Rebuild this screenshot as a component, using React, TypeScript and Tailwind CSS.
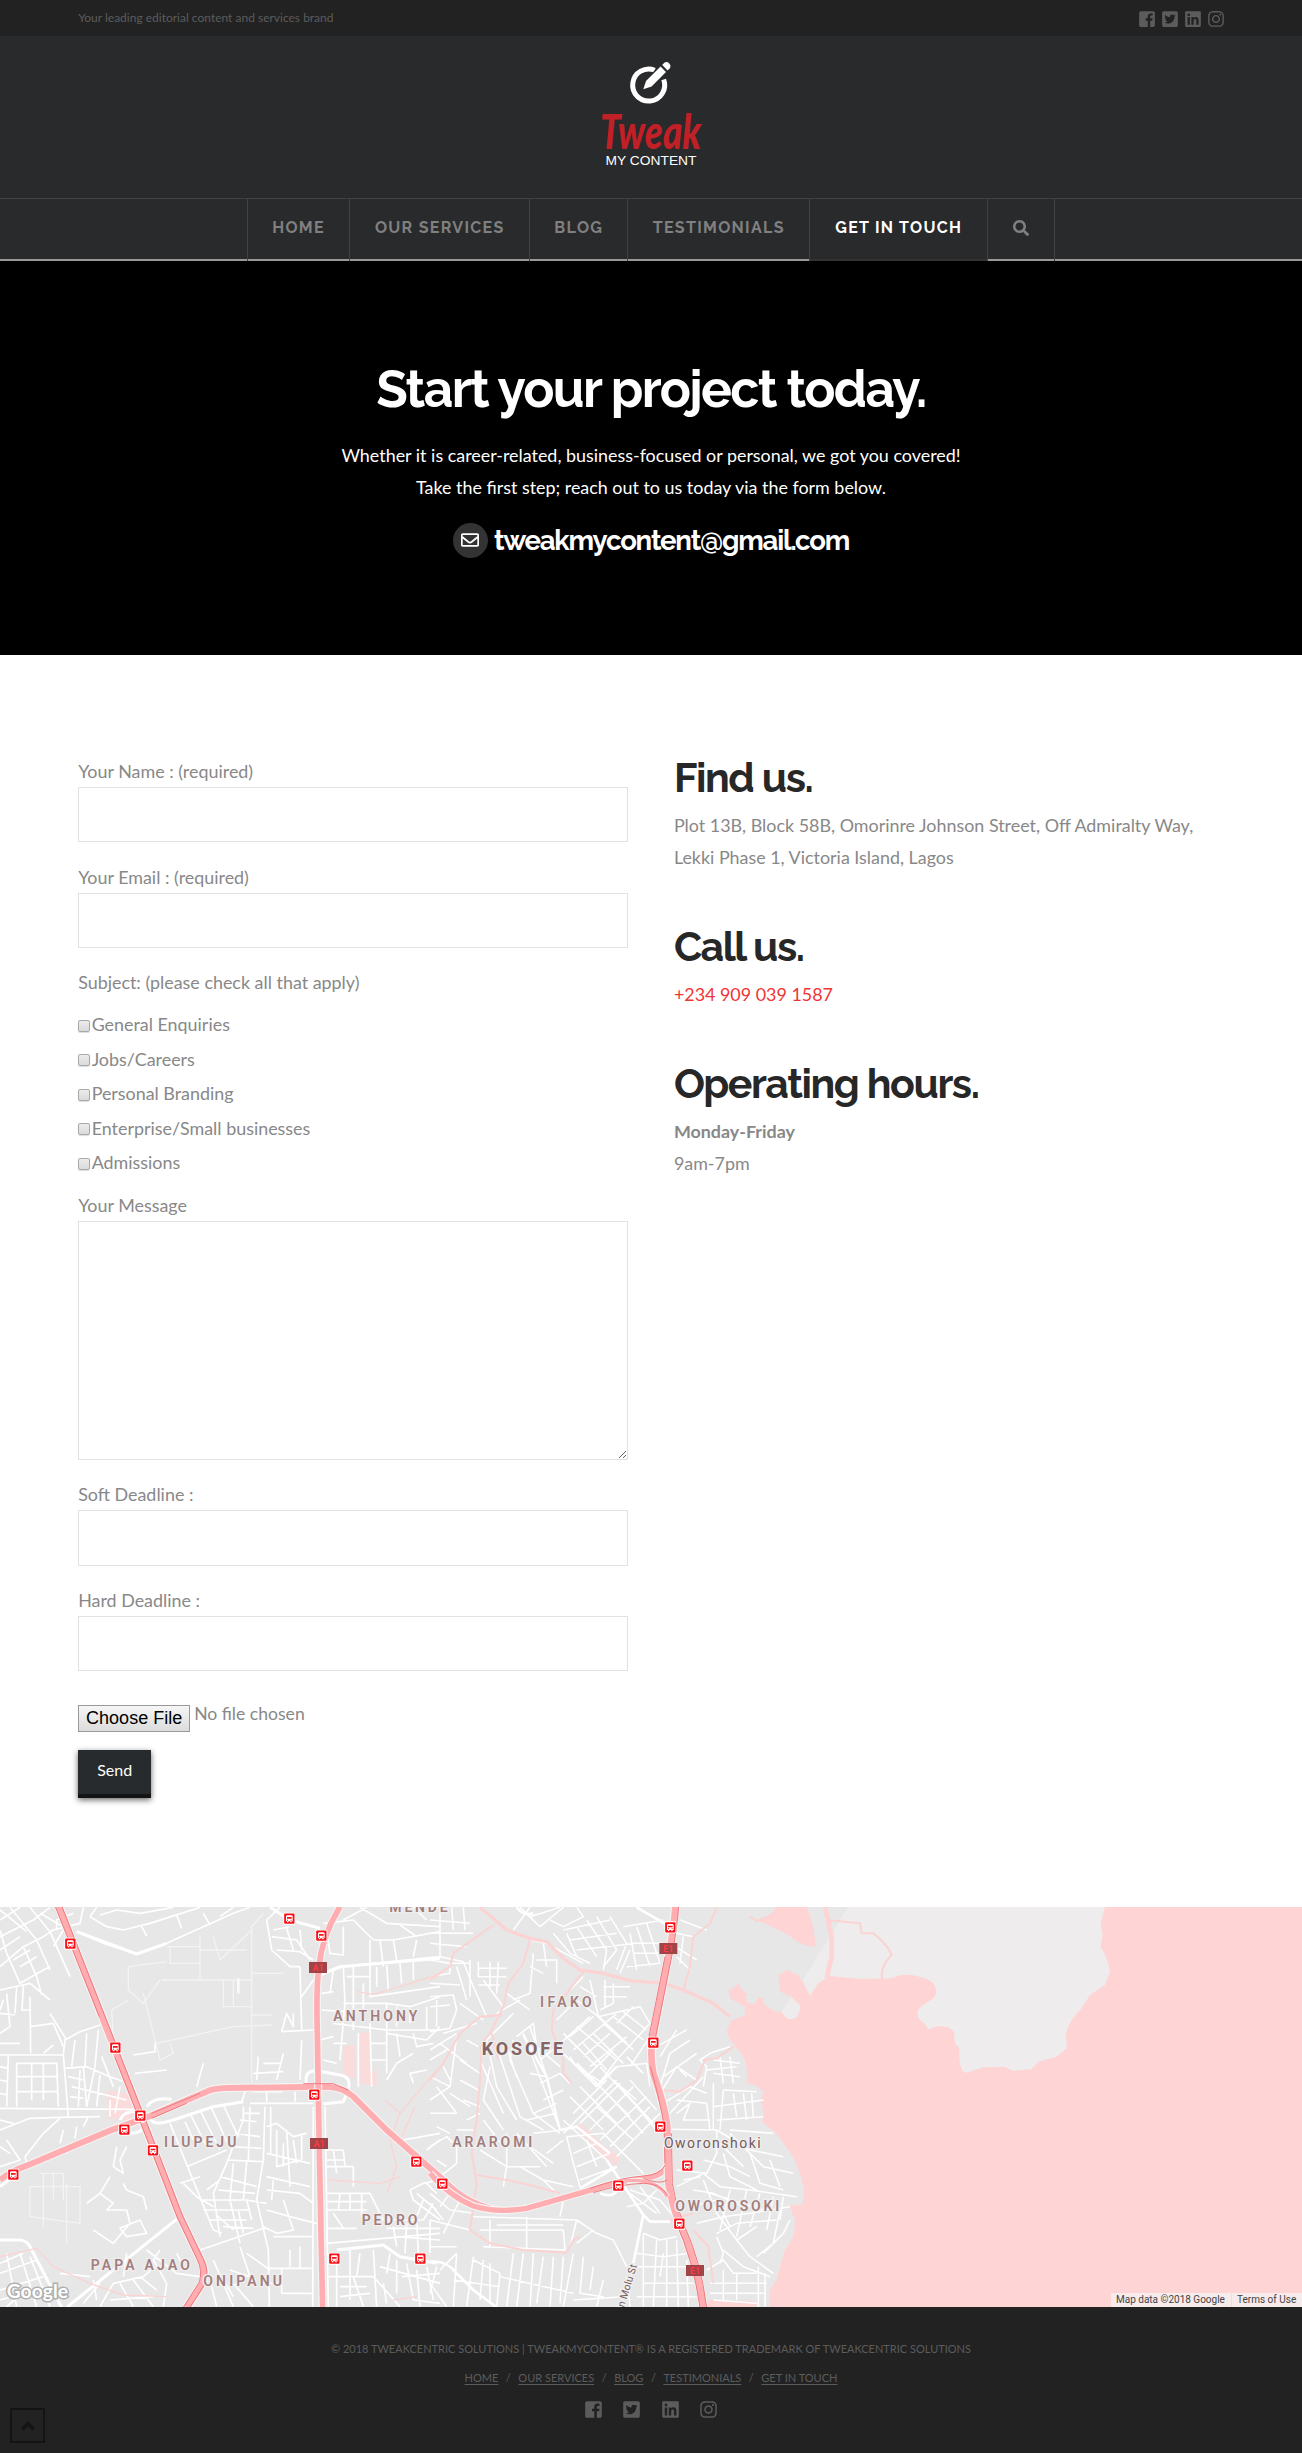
import React from 'react';
import { FaAngleUp, FaInstagram, FaLinkedin, FaRegEnvelope, FaSearch, FaTwitterSquare } from 'react-icons/fa';

function FacebookBox() {
  return (
    <svg width="1em" height="1em" viewBox="0 0 448 512" fill="currentColor">
      <path d="M448 80v352c0 26.5-21.5 48-48 48h-85.3V302.8h60.6l8.7-67.6h-69.3V192c0-19.6 5.4-32.9 33.5-32.9H384V98.7c-6.2-.8-27.4-2.7-52.2-2.7-51.6 0-87 31.5-87 89.4v49.9H184v67.6h60.9V480H48c-26.5 0-48-21.5-48-48V80c0-26.5 21.5-48 48-48h352c26.5 0 48 21.5 48 48z" />
    </svg>
  );
}

const socials = [FacebookBox, FaTwitterSquare, FaLinkedin, FaInstagram];

function Logo() {
  return (
    <svg width="110" height="120" viewBox="0 0 110 120" className="overflow-visible" aria-label="Tweak My Content">
      <path d="M58.7 18.2 A16 16 0 1 0 67.7 27.5" fill="none" stroke="#fff" strokeWidth="5" />
      <path d="M47.3 37.3 L50 29 L64.6 14.6 L70 20 L55.6 34.6 Z" fill="#fff" stroke="#292a2c" strokeWidth="3" paintOrder="stroke" />
      <path d="M66.2 13 L68.3 10.8 A4 4 0 0 1 73.8 16.3 L71.6 18.4 Z" fill="#fff" />
      <text x="4" y="96.5" textLength="101" lengthAdjust="spacingAndGlyphs" className="fill-[#c02026] font-['Lato'] text-[47px] font-black italic">
        Tweak
      </text>
      <text x="9.5" y="113" textLength="91" lengthAdjust="spacingAndGlyphs" className="fill-white font-['Liberation_Sans'] text-[12.6px]">
        MY CONTENT
      </text>
    </svg>
  );
}

const nav = [
  { label: 'HOME', size: 'w-[102.5px]' },
  { label: 'OUR SERVICES', size: 'w-[180px]' },
  { label: 'BLOG', size: 'w-[98px]' },
  { label: 'TESTIMONIALS', size: 'w-[182px]' },
  { label: 'GET IN TOUCH', size: 'w-[178px]' },
];

function Header() {
  return (
    <header className="bg-[#292a2c]">
      <div className="h-9 bg-[#222]">
        <div className="mx-auto flex h-full w-[88%] items-center justify-between">
          <p className="text-[12px] leading-9 text-[#5c5c5c]">Your leading editorial content and services brand</p>
          <div className="-mr-[1.5px] flex gap-[5px] pt-0.5 text-[18px] text-[#5c5c5c]">
            {socials.map((Icon, i) => (
              <Icon key={i} />
            ))}
          </div>
        </div>
      </div>
      <div className="flex h-[162px] justify-center pt-[16px]">
        <Logo />
      </div>
      <nav className="flex h-[63px] justify-center border-t border-[#414244] font-['Raleway','Lato',sans-serif] text-[16px] font-bold leading-[58px] tracking-[1.3px] whitespace-nowrap text-[#808080] shadow-[inset_0_-2px_0_#999]">
        {nav.map(({ label, size }) => (
          <a
            key={label}
            className={`${size} border-l border-[#414244] text-center ${
              label === 'GET IN TOUCH' ? 'bg-[#292a2c] text-white shadow-[inset_0_-2px_0_#333]' : ''
            }`}
          >
            {label}
          </a>
        ))}
        <a className="flex w-[68px] justify-center border-x border-[#414244] pt-[21px] text-[16px]">
          <FaSearch />
        </a>
      </nav>
    </header>
  );
}

function Hero() {
  return (
    <section className="flex h-[394px] flex-col items-center bg-black pt-[100px] text-white">
      <h1 className="font-['Raleway','Lato',sans-serif] text-[51.5px] font-bold leading-[56px] tracking-[-1.65px]">
        Start your project today.
      </h1>
      <p className="mt-[22px] text-center text-[17.9px] leading-[32.3px]">
        Whether it is career-related, business-focused or personal, we got you covered!
        <br />
        Take the first step; reach out to us today via the form below.
      </p>
      <div className="mt-[19px] flex items-center gap-1.5">
        <span className="flex size-[35px] items-center justify-center rounded-full bg-[#333] text-[18px]">
          <FaRegEnvelope />
        </span>
        <span className="font-['Raleway','Lato',sans-serif] text-[27.5px] font-bold leading-[35px] tracking-[-1.22px]">
          tweakmycontent@gmail.com
        </span>
      </div>
    </section>
  );
}

const subjects = ['General Enquiries', 'Jobs/Careers', 'Personal Branding', 'Enterprise/Small businesses', 'Admissions'];

function ContactForm() {
  return (
    <form className="flex w-[550px] flex-col leading-[30px]">
      <label className="h-[31px]">Your Name : (required)</label>
      <input className="h-[55px] border border-[#e2e2e2]" />
      <label className="mt-5 h-[31px]">Your Email : (required)</label>
      <input className="h-[55px] border border-[#e2e2e2]" />
      <label className="mt-[19px] h-[30px]">Subject: (please check all that apply)</label>
      <div className="mt-[10px] flex flex-col">
        {subjects.map((s) => (
          <label key={s} className="flex h-[34.5px] items-center">
            <span className="mt-[3px] mr-[1.5px] size-3 rounded-[2px] border border-[#a9a9a9] bg-linear-to-b from-[#ececec] to-[#dadada] shadow-[0_1px_1px_#ddd]" />
            {s}
          </label>
        ))}
      </div>
      <label className="mt-[10.5px] h-[31px]">Your Message</label>
      <textarea className="h-[239px] border border-[#e2e2e2]" />
      <label className="mt-[19px] h-[31px]">Soft Deadline :</label>
      <input className="h-[56px] border border-[#e2e2e2]" />
      <label className="mt-[19px] h-[31px]">Hard Deadline :</label>
      <input className="h-[55px] border border-[#e2e2e2]" />
      <div className="mt-[34px] flex h-[27px]">
        <button
          type="button"
          className="h-[27px] w-[112px] border border-[#999] bg-linear-to-b from-[#f6f6f6] to-[#dcdcdc] font-['Liberation_Sans'] text-[18px] leading-[23px] whitespace-nowrap text-black"
        >
          Choose File
        </button>
        <span className="ml-1 text-[17.6px] leading-[17px]">No file chosen</span>
      </div>
      <button
        type="button"
        className="mt-[18px] h-12 w-[73px] border-b-4 border-[#141414] bg-[#282b2d] pb-1 text-[16px] leading-[38px] text-white shadow-[0_2px_6px_rgba(0,0,0,0.6)]"
      >
        Send
      </button>
    </form>
  );
}

function Info() {
  const heading = "font-['Raleway','Lato',sans-serif] text-[41px] leading-[41px] font-bold tracking-[-0.035em] text-[#272727]";
  return (
    <div className="w-[550px] pt-px leading-8">
      <h2 className={heading}>Find us.</h2>
      <p className="mt-[11px]">
        Plot 13B, Block 58B, Omorinre Johnson Street, Off Admiralty Way,
        <br />
        Lekki Phase 1, Victoria Island, Lagos
      </p>
      <h2 className={`${heading} mt-[53px]`}>Call us.</h2>
      <p className="mt-[11px] text-[#f03535]">+234 909 039 1587</p>
      <h2 className={`${heading} mt-[53px]`}>Operating hours.</h2>
      <p className="mt-[11px]">
        <strong>Monday-Friday</strong>
        <br />
        9am-7pm
      </p>
    </div>
  );
}

// Map geometry. WEST_* uses 3 units per pixel from the map's left edge,
// EAST_* uses the same scale with its origin 430px further right.
const WEST_STREETS = [
  'M0 60L60 22M0 110L40 90L100 60L150 22M0 200L70 140L130 110L160 90L240 70L250 22M70 140L110 230L125 285M20 160L60 250L130 210L150 200M110 120L150 210M150 95L210 230M190 90L160 140M0 270L90 250L150 300M90 290L92 460M0 465L190 465M25 465L20 620M50 490L50 620M50 490L170 490L175 620M95 490L95 600M130 490L130 600M50 530L175 530M50 575L175 575M190 465L195 420L240 395L300 375M190 465L205 650M195 505L260 500L330 530L400 555M225 420L215 500M260 400L255 500M295 390L285 500L260 620M215 560L380 600M240 510L235 620M300 525L290 620',
  'M0 30L80 95M30 22L110 120M90 22L150 95M0 150L60 110M0 90L20 160M40 180L90 150M60 200L110 170M170 90L170 60L220 40M120 40L190 80M20 280L30 380L0 400M50 262L45 340M70 258L66 330L90 330M0 340L45 345M10 300L0 330M90 380L160 370L190 440M150 340L200 420M130 460L160 435M0 500L25 505M0 540L22 545M0 580L20 585M0 430L60 430M305 470L340 560M205 530L250 540M210 590L250 595M330 600L330 650M360 560L345 640',
  'M270 50L290 22M270 50L320 80L370 90L450 70L600 22M230 95L310 130L410 162L500 130L700 40L750 22M425 80L440 108M530 45L545 85M610 40L630 75M300 45L350 30L420 40L520 22M660 50L700 22',
  'M0 625L400 628M0 690L90 655L180 652L300 650M75 770L130 700L180 655M75 770L80 790M20 720L60 780L0 800M265 650L250 680M350 740L340 800L370 820L360 780L380 740M260 910L300 880L340 910L320 930L380 930M370 850L380 870L430 890L440 930M0 1020L60 1020M190 690L180 730M230 680L225 715M0 740L30 760M0 660L40 670M330 830L300 880M380 930L390 970L340 1030L280 990M360 985L420 960L440 1000L380 1010Z',
  'M510 670L640 990L665 1000M570 640L620 740M600 630L660 750M555 665L580 720M560 800L680 750M540 850L600 830M550 850L590 890L640 920M600 900L740 900L800 910M660 1010L640 880L680 790L730 660L730 620M730 640L780 640M795 620L790 780L770 900M720 660L770 665M705 700L780 710M690 740L785 745M680 780L790 785M800 680L830 670L880 710L920 700M830 690L830 800L900 780M860 690L870 860M800 760L930 790M800 830L930 860M800 870L900 880L940 910M610 930L750 930M630 960L740 960M690 900L720 1030M740 900L755 960M770 900L805 1050L808 1220M800 930L870 950L950 970M850 900L880 990L830 1000L790 980M600 1050L790 985M640 1080L700 1220M720 1040L750 1130L690 1110M740 1060L810 1110M700 1150L760 1220M808 1105L935 1105M845 1105L845 1180L935 1180M808 1150L845 1150M870 1050L870 1100M900 1040L900 1105M820 1010L935 1010M635 625L690 745M670 615L715 710M620 870L660 840M750 620L745 780M812 620L812 760M850 730L850 800M880 720L890 790M905 700L905 780M660 830L770 860M655 870L765 880M700 790L690 900M740 785L730 900M820 840L815 900M670 980L760 985M650 945L700 990M715 930L730 1000',
  'M1320 1000L980 1030L980 930M980 880L1110 880L1150 960L1270 960M1020 880L1015 930M1050 880L1050 930M1085 880L1085 950M980 905L1100 905M980 930L1100 930M1000 940L1030 985M980 985L1070 985M1010 1090L1010 1220M1050 1050L1050 1200M980 1130L1120 1130L1200 1220M1080 1060L1070 1130M1120 1050L1130 1220M1020 1160L1100 1160M1190 1080L1190 1180M1220 1090L1240 1200L1320 1210M1280 1100L1300 1200M1140 1100L1320 1150M975 750L1030 750M1000 750L1010 820M1030 750L1035 800M980 780L1030 780M980 800L1060 800L1060 860M1020 1190L1110 1180M1060 1130L1090 1220M1150 1150L1160 1210M1170 1060L1160 1120M1205 1130L1320 1120M1250 1110L1260 1220',
  'M940 620L938 1220M975 620L985 1220M900 200L905 390M845 395L860 340L880 380L880 340M845 395L940 390M905 290L940 240M960 225L1030 200L1320 170M970 70L1060 60L1120 120L1180 120L1320 95M1030 60L1100 22M1110 120L1110 200M1140 120L1150 200M1180 120L1190 180M1080 22L1160 70L1320 80M1200 75L1250 110M1240 22L1280 60M1250 120L1240 170M1030 200L1035 310L1020 480M1000 210L990 280M1060 200L1060 390M1090 250L1090 330M1110 200L1110 290L1320 260M1030 310L1160 310L1230 320L1320 290M1160 310L1160 520M1190 320L1190 380M1230 325L1230 370M1000 370L1160 390L1320 390M1000 430L1040 430M1110 370L1115 560M1075 400L1075 560M1160 400L1280 420L1320 380M1240 400L1250 440L1300 430M1160 540L1190 490L1240 460M1240 550L1230 520L1280 510M1130 200L1130 260M1160 195L1165 270M1200 190L1205 250M1240 185L1240 240M1040 230L1110 230M965 280L1000 275M965 330L1035 335M960 420L1000 410M970 480L1010 490M1280 320L1280 390M1110 430L1160 430M1115 480L1160 480M1190 400L1200 470',
  'M800 60L815 150L870 200L900 200M800 60L840 22M820 90L870 80M815 110L890 120L930 180M830 150L900 155L940 180M860 85L880 150M900 90L905 150M980 90L990 160L1030 165L1030 80',
  'M750 610L940 610M760 575L850 575M800 575L800 605M885 575L885 605M735 575L725 605M770 540L775 470M830 540L850 460M790 490L840 490M760 520L850 515M900 540L905 420M250 500L260 620M590 560L610 490M405 520L500 510M400 465L465 455L465 430',
  'M60 1060L110 1220M0 1120L110 1080M0 1170L130 1130M20 1060L50 1220M20 1220L90 1160M300 1220L340 1150L430 1130L465 1100M360 1150L400 1220M400 1140L460 1220M180 1120L270 1130M440 1050L530 1120L600 1130M370 1130L380 1060M480 1050L460 1080L500 1150L490 1220M530 1060L550 1100M0 1090L70 1060M0 1200L140 1160M90 1070L150 1220M250 1210L300 1150M280 1140L290 1200M420 1130L470 1170M330 1200L460 1190M630 1140L650 1220M670 1140L700 1190',
  'M1230 870L1270 850L1320 840M1230 870L1240 900L1320 960M1250 880L1310 930M1280 850L1310 880M1210 720L1320 700M1280 750L1320 720M1180 980L1190 1040M1220 970L1215 1060M1250 960L1255 1060M1290 960L1290 1060M1190 1010L1320 1020M1160 985L1320 985M1270 900L1250 950M1300 910L1270 960',
];

const EAST_STREETS = [
  'M0 100L130 100M0 130L110 140M30 22L30 170L100 185M65 22L70 90M100 22L105 90M0 60L120 70M0 180L60 190L120 190M100 185L130 260L170 350M120 180L120 290M145 185L145 230L230 230M180 185L180 260M205 185L200 280M145 205L230 205M145 255L210 255M0 230L60 220L60 190M80 200L110 300M0 290L70 285L80 330L60 385L0 395M0 320L60 315M20 300L20 380M90 310L160 360M40 400L140 370M0 450L80 400M30 430L110 490M80 410L60 560L0 600M90 480L150 520M0 530L60 560M20 560L80 640M0 640L80 640M60 580L120 620M160 240L220 320M0 480L50 450M110 420L145 440M40 500L60 540M90 540L145 570M0 250L90 255M170 420L250 340M200 340L270 300M230 280L300 330',
  'M250 90L300 22M270 22L330 80M300 50L390 22M330 80L400 22M360 60L400 80L460 50L440 22M300 120L350 130L460 190M310 160L300 280L250 300M300 200L340 220M320 180L380 180L380 250M340 130L350 200M370 100L420 160L480 190M410 100L440 170M440 80L500 170M470 60L530 150M500 50L560 150L520 200M540 50L590 130L560 210M400 90L540 60M420 120L560 100M440 150L620 130M580 80L700 60M620 80L660 200M650 70L690 190M600 130L700 130M610 160L700 160M590 200L690 190M600 100L620 210M520 210L530 150M570 220L600 150M740 100L790 110M735 140L800 180M750 60L830 90M740 170L780 210M760 110L750 190',
  'M480 240L505 350L440 300L380 360M505 350L630 320L660 370L560 480L500 560L380 440L480 350M420 410L490 350M440 380L560 480M460 470L540 400M430 450L560 340M480 500L590 410M400 400L500 500M460 430L530 510M490 400L580 490M520 370L610 450M550 350L640 420M580 335L650 390M610 320L560 370M420 470L440 500L520 550M470 530L550 450M520 260L600 260M525 240L525 320M550 250L550 310L510 330M520 290L590 290M450 260L500 290M420 270L460 230',
  'M260 410L310 370L320 440M280 400L390 690M250 420L240 480L310 640L390 700M200 440L270 650L340 690M170 420L200 560L260 660M150 480L220 640M180 500L160 600L220 690M230 440L260 530M300 380L350 530M320 440L390 500M330 550L390 520L420 550M330 480L380 440M300 520L350 530M340 600L400 570M310 640L380 610M290 660L380 640M310 700L400 690M400 700L500 600L560 540M420 590L520 690M450 560L560 670M480 530L600 650M510 500L640 640M430 640L530 540M450 670L570 550M480 690L610 560M510 720L650 590M540 740L660 620M560 770L690 640M400 660L530 780M500 620L610 720M540 590L640 700M570 560L670 670M600 540L680 630M560 500L650 490L660 560M600 500L640 440L660 410M590 470L640 520M550 540L620 600M620 620L680 690',
  'M410 710L430 790L450 860M410 710L520 700L640 820M430 760L500 730M440 800L540 760M450 840L560 800M470 720L500 800M350 760L400 720M300 740L370 790M260 700L350 800M230 700L230 800L330 800M160 660L220 740M150 750L230 800L220 860M270 800L340 840L430 860M340 840L380 880',
  'M0 880L60 930L130 940M0 910L40 960M60 880L30 920M90 900L40 1000M0 960L120 990M0 740L50 710L80 740L80 790L30 830M20 780L50 800M0 800L80 870M100 600L150 620M110 660L150 640M80 690L130 690M60 700L20 680',
  'M130 950L440 960L500 1000L550 1020L590 1100M180 960L180 1040M150 990L400 990L405 1050L160 1040M290 950L290 1050M200 975L400 975M440 960L420 1040M490 990L440 1030M400 900L390 950M0 1040L80 1040M80 1060L70 1220M130 1070L110 1220M130 1080L210 1120L200 1220M160 1080L150 1200M180 1090L180 1210M250 1060L230 1220M280 1060L260 1220M310 1060L300 1220M340 1070L320 1210M370 1070L360 1220M400 1070L390 1210M430 1060L400 1220M210 1130L430 1180M70 1140L210 1160M30 1110L80 1060M0 1150L50 1220M20 1100L0 1180M460 1070L450 1180L520 1190M490 1100L480 1170M430 1200L580 1190M520 1140L500 1220',
  'M620 1060L700 1070L780 1060M610 1100L770 1100M640 1150L790 1150M620 1190L800 1190M640 1000L690 1020L740 1010M640 1000L640 1220M680 1020L670 1220M710 1020L710 1220M740 1020L745 1220M770 1080L775 1220M590 1130L600 1220M600 870L690 900L740 960M600 880L680 940M630 860L690 940M590 920L640 910L680 870M700 1060L690 1130',
  'M720 688L860 690L860 760L830 820L740 810M740 600L830 610L840 690M740 640L780 610L760 660L840 660M850 550L850 690M880 570L870 690M850 620L1000 600M880 570L980 575M910 580L920 650M940 580L950 660M965 580L970 650M860 660L1000 650M900 690L1030 700M860 690L960 750L1060 770M870 730L940 800M900 700L1000 800L1090 820M820 560L830 500L810 480L840 460L900 440M830 510L920 500M850 480L930 490M850 520L930 530M870 470L880 550M900 470L910 550M690 580L740 500L800 540M700 610L780 560L830 580M720 640L820 530M690 560L720 460L780 420M700 530L800 460M690 470L740 390M680 440L770 390M750 510L770 530',
  'M740 860L820 820L870 860L960 870L1100 890M760 840L810 830M790 870L850 880L940 920M820 840L860 940L920 1020M840 880L1000 930M780 920L860 900L900 980M900 870L870 990M950 870L920 1010M990 880L960 980M1030 890L1010 990M1060 890L1050 960M800 970L880 950L960 940L1080 920M860 1000L920 970L1040 960M920 1020L980 980M920 1020L960 1070L1030 1120M880 1050L940 1100L1020 1130M860 1010L880 1060L870 1090M1050 930L1030 1030L980 1070M1080 960L1060 1000L1000 1060M830 1110L880 1080L910 1120L980 1120M840 1150L1010 1150M840 1180L1000 1180M880 1110L880 1200M920 1120L920 1200M985 1100L985 1220M1005 1120L1005 1220M850 1200L980 1210M820 780L900 800L960 830M880 760L900 830L980 870M960 760L990 850L1060 870M1020 780L1050 860',
];

const ROUTES_WEST = [
  { d: 'M175 15L420 640L540 950L600 1075Q620 1110 608 1150L560 1222', w: 20 },
  { d: 'M0 840Q30 815 80 797L330 692L450 648Q560 600 620 575Q640 565 680 564L980 560Q1030 562 1060 590L1160 690L1330 840Q1400 915 1500 932', w: 18 },
  { d: 'M1020 20Q965 110 957 200Q948 260 952 400L957 700L963 1000L968 1222', w: 17 },
];
const ROUTES_EAST = [
  { d: 'M0 820Q60 890 130 918Q200 940 290 925L500 865Q570 842 640 835Q700 830 716 790', w: 16 },
  { d: 'M736 20Q733 80 715 170L667 420Q660 470 670 520Q705 620 712 680L715 850Q725 910 748 970Q800 1080 820 1222', w: 20 },
  { d: 'M590 842Q680 835 712 890', w: 10 },
];

const STREAMS = [
  'M150 22L230 90L300 115L350 125L400 175L450 210L520 220L600 242L700 250L760 270L850 310L900 350',
  'M300 120L280 190L235 250L220 320L180 400L155 430L150 540L140 660L125 760L140 850L120 990L180 1030L280 1050L410 1058L430 1020L450 1010',
  'M190 75L70 160L60 200L0 240M215 345L150 350L90 400L40 490L0 540',
  'M460 215L410 280L370 330L365 390L400 480L400 520L425 550M185 400L205 480M140 825L230 840L300 855L390 880',
  'M860 22L840 70L790 110L780 200L760 270M910 440L860 475L825 480L800 540L750 575L690 570M790 990L835 1040L850 1150M720 960L790 940',
  'M960 50L980 62L1040 40M1195 60L1290 70L1295 100L1330 100Q1370 130 1385 165Q1350 200 1356 237',
];

const WATER =
  'M1200 228L1165 250L1140 288L1120 250L1105 225L1070 210L1045 225L1050 275L1085 290L1112 320L1100 352L1075 358L1055 335L1035 335L1000 310L1000 295L985 292L975 312L955 310L945 290L955 285L930 262L930 245L915 260L895 270L900 295L945 320L945 345L905 360L890 390L900 420L930 455L945 480L952 520L950 548L975 555L1000 575L992 600L1000 640L995 665L1035 695L1060 730L1090 770L1110 820L1122 870L1118 912L1078 918L1095 960L1090 1010L1065 1050L1050 1100L1040 1140L1020 1170L1018 1222L2620 1222L2620 20L2025 20L2012 70L2018 100L2012 140Q2036 180 2040 215L2025 255L1980 285L1955 325Q1915 365 1908 400L1910 445L1880 470L1825 485L1805 508L1750 512L1720 500L1660 502L1610 518Q1585 518 1588 445L1575 430L1572 395L1555 382L1525 378L1495 388L1485 372Q1445 345 1475 318L1510 295Q1530 270 1505 245Q1435 210 1385 235L1290 237Z';

const BUSES = [
  [211, 131], [346, 443], [421, 647], [373, 689], [459, 751], [40, 824], [868, 56], [964, 107], [943, 584],
  [1249, 785], [1003, 1076], [1261, 1076], [1327, 851], [1855, 857], [2011, 82], [1960, 428], [1981, 680], [2062, 797], [2038, 971],
];

const SHIELDS: [string, number, number][] = [
  ['A1', 954, 203], ['A1', 957, 731], ['E1', 2005, 146], ['E1', 2085, 1112],
];

const LABELS: [string, number, number, number][] = [
  ['MENDE', 1168, 36, 175], ['ANTHONY', 1000, 363, 252], ['ILUPEJU', 492, 740, 217], ['PEDRO', 1085, 975, 167],
  ['PAPA AJAO', 272, 1110, 298], ['ONIPANU', 610, 1158, 236], ['IFAKO', 1620, 320, 155], ['ARAROMI', 1357, 741, 240],
  ['OWOROSOKI', 2026, 934, 312],
];

function StreetMap() {
  return (
    <div className="relative h-[400px] overflow-hidden bg-[#e7e7e7]">
      <svg width="1302" height="400" viewBox="0 21 3906 1200" className="block font-['Roboto']">
        <g fill="none" stroke="#f3f3f3" strokeWidth="4">
          <path d="M500 140L600 140M510 140L510 190L600 190M600 110L600 240M485 240L755 240M385 200L385 270L430 310L480 240M385 200L500 185M755 80L755 550M670 240L670 320L755 320M755 80L790 40M640 110L660 180L755 90M600 150L740 150M335 330L385 300M335 330L340 420M470 430L700 380L815 375M430 280L480 480L520 460L510 430M755 345L815 345M120 820L190 820L190 900M90 860L240 860L240 970L90 950ZM130 820L130 980M160 820L160 900M200 850L200 1030M755 220L850 220M700 240L700 320" />
          <path d="M715 235L715 280" strokeWidth="8" stroke="#fafafa" />
        </g>
        <g fill="#fbdcdc">
          <path d="M325 570L385 580L410 628L390 660L322 655ZM1030 440L1065 435L1065 535L1030 525ZM1078 400L1110 395L1112 510L1130 515L1130 558L1080 550Z" />
          <path transform="translate(1290 0)" d="M435 680L455 672L520 735L568 770L562 800L530 780Z" />
        </g>
        <g transform="translate(1290 0)">
          <path d="M1255 20L1118 240L1140 288L1210 240L1300 540L2060 540L2060 20ZM1055 335L1085 290L1125 320L1100 362L1070 364Z" fill="#eeecec" />
          <path d={WATER} fill="#ffd4d4" strokeLinejoin="round" />
          <path d="M1040 20L1130 20L1150 80L1158 140Q1110 140 1080 108L1020 78L985 62L1020 45ZM835 1200L980 1204L978 1222L825 1222Z" fill="#ffd4d4" />
          <path d="M1185 20L1205 110L1205 170L1190 235" fill="none" stroke="#ffd4d4" strokeWidth="14" />
          <path d="M1055 338L1085 300Q1115 310 1110 330L1098 352Q1075 366 1062 345Z" fill="#eeecec" />
        </g>
        <g fill="none" stroke="#fff" strokeWidth="5" strokeLinejoin="round">
          {WEST_STREETS.map((d) => (
            <path key={d} d={d} />
          ))}
          <g transform="translate(1290 0)" strokeWidth="4.6">
            {EAST_STREETS.map((d) => (
              <path key={d} d={d} />
            ))}
          </g>
        </g>
        <g fill="none" stroke="#fff" strokeWidth="9" strokeLinejoin="round">
          <path d="M0 1020L60 1020Q85 1022 95 1050L185 1222M200 1222L540 950M230 95L410 162L500 130M810 22L870 60L960 85M0 860L40 830M1010 1050L1150 1035L1200 1070L1310 1090M450 655Q460 680 520 660L640 620L730 605M360 660Q370 630 420 635M390 700Q430 700 435 670M920 555Q910 510 950 512L1020 525Q1055 530 1045 570L1030 605L970 612M440 620Q460 590 515 598M960 225L1020 200L1320 175" />
          <g transform="translate(1290 0)">
            <path d="M530 780L590 870L640 945L610 1090M640 945L660 965L720 965M0 1085Q50 1080 80 1120L130 1170L200 1222M620 22L720 80M390 690L440 680L540 760M260 22Q280 50 310 40M450 865L560 800M510 880Q560 900 570 850" strokeWidth="8" />
            <path d="M280 405L350 530L390 690M505 350L590 430M440 490L505 555L560 500" strokeWidth="7" />
          </g>
        </g>
        <g fill="none" stroke="#fbd3d3" strokeWidth="5" transform="translate(1290 0)">
          {STREAMS.map((d, i) => (
            <path key={d} d={d} strokeWidth={i === 0 ? 10 : 6} />
          ))}
        </g>
        <g fill="none" stroke="#fbd3d3" strokeWidth="4">
          <path d="M0 1070L110 1045L160 1100L270 1150L370 1185L500 1190M1070 275L1120 283L1200 260L1310 225M1155 600L1200 640L1310 510M1200 640L1170 720L1190 800L1160 880M985 840L1140 850L1200 830M1205 710L1245 620M1180 1200L1250 1190" />
        </g>
        {[{ routes: ROUTES_WEST, t: 'translate(0 0)' }, { routes: ROUTES_EAST, t: 'translate(1290 0)' }].map(({ routes, t }) => (
          <g key={t} transform={t} fill="none">
            {routes.map((r) => (
              <g key={r.d}>
                <path d={r.d} stroke="#f4f4f4" strokeWidth={r.w + 7} />
                <path d={r.d} stroke="#ffadb0" strokeWidth={r.w} />
              </g>
            ))}
          </g>
        ))}
        <g fill="none" stroke="#ee7b80" strokeWidth="3">
          <path d="M184 15L429 640L549 950L609 1075Q628 1110 616 1150L570 1222M166 20L298 350M344 470L411 640L531 950L592 1079Q608 1110 598 1146L550 1222M455 640L600 580M455 655L560 610M910 551L1000 551L1045 570" />
          <g transform="translate(1290 0)">
            <path d="M746 20Q742 80 725 170L677 410M705 170L657 410M661 500Q695 620 702 680L705 790M724 700L727 850Q735 910 760 970Q812 1080 830 1222M735 960Q790 1080 810 1222M480 865Q570 833 640 828Q690 825 706 795M490 878Q570 852 640 850Q690 850 712 885M640 835Q690 855 712 840" />
          </g>
        </g>
        {LABELS.map(([t, x, y, w]) => (
          <text key={t} x={x} y={y} textLength={w} className="fill-[#a37d7d] stroke-[#efefef] stroke-[8px] text-[42px] font-semibold [paint-order:stroke]">
            {t}
          </text>
        ))}
        <text x="1445" y="465" textLength="244" className="fill-[#846464] stroke-[#efefef] stroke-[8px] text-[54px] font-bold [paint-order:stroke]">
          KOSOFE
        </text>
        <text x="1992" y="744" textLength="290" className="fill-[#765a5a] stroke-[#efefef] stroke-[8px] text-[42px] [paint-order:stroke]">
          Oworonshoki
        </text>
        <text x="0" y="0" transform="translate(1867 1240) rotate(-73)" textLength="150" className="fill-[#765a5a] stroke-[#efefef] stroke-[8px] text-[31px] [paint-order:stroke]">
          un Molu St
        </text>
        {SHIELDS.map(([t, x, y]) => (
          <g key={`${x}-${y}`} transform={`translate(${x} ${y})`}>
            <rect x="-27" y="-17" width="54" height="33" fill="#a04448" />
            <text y="10" textAnchor="middle" className="fill-[#f83a45] text-[27px] font-bold">
              {t}
            </text>
          </g>
        ))}
        {BUSES.map(([x, y]) => (
          <g key={`${x}-${y}`} transform={`translate(${x} ${y})`}>
            <rect x="-18" y="-18" width="36" height="36" rx="4" fill="#fff" />
            <rect x="-15.5" y="-15.5" width="31" height="31" rx="3" fill="#fb0f17" />
            <path d="M-10 -6Q-10 -10 -6 -10L6 -10Q10 -10 10 -6L10 8L7 8L7 11L3 11L3 8L-3 8L-3 11L-7 11L-7 8L-10 8Z" fill="#fff" />
            <path d="M-7 -5H7V0H-7ZM-7 3H-4V6H-7ZM4 3H7V6H4Z" fill="#fb0f17" />
          </g>
        ))}
        <text x="20" y="1194" textLength="184" className="fill-white stroke-[#b0b0b0] stroke-[9px] font-['Lato'] text-[58px] font-bold [paint-order:stroke]">
          Google
        </text>
      </svg>
      <div className="absolute right-0 bottom-0 flex h-[14px] gap-px font-['Roboto'] text-[10px] leading-[14px] text-[#444]">
        <span className="w-[120px] bg-[#f7ebeb] pl-[5px] whitespace-nowrap">Map data ©2018 Google</span>
        <span className="w-[70px] bg-[#f7ebeb] pl-[5px] whitespace-nowrap">Terms of Use</span>
      </div>
    </div>
  );
}

const footerLinks = ['HOME', 'OUR SERVICES', 'BLOG', 'TESTIMONIALS', 'GET IN TOUCH'];

function Footer() {
  return (
    <footer className="relative flex h-[146px] flex-col items-center bg-[#222] pt-[32px] text-[11px] leading-5 text-[#5c5c5c]">
      <p>© 2018 TWEAKCENTRIC SOLUTIONS | TWEAKMYCONTENT® IS A REGISTERED TRADEMARK OF TWEAKCENTRIC SOLUTIONS</p>
      <div className="mt-[9px] flex">
        {footerLinks.map((l, i) => (
          <React.Fragment key={l}>
            {i > 0 && <span className="w-5 text-center">/</span>}
            <a className="underline underline-offset-2">{l}</a>
          </React.Fragment>
        ))}
      </div>
      <div className="mt-[12px] flex gap-[19.5px] text-[19px]">
        {socials.map((Icon, i) => (
          <Icon key={i} />
        ))}
      </div>
      <a className="absolute bottom-[10px] left-[10px] flex size-[35px] items-center justify-center border-2 border-[#141414] text-[22px] text-[#141414]">
        <FaAngleUp />
      </a>
    </footer>
  );
}

export default function App() {
  return (
    <div className="w-full bg-white font-['Lato',sans-serif] text-[17.9px] text-[#888]">
      <Header />
      <Hero />
      <main className="mx-auto flex h-[1252px] w-[88%] justify-between pt-[101px]">
        <ContactForm />
        <Info />
      </main>
      <StreetMap />
      <Footer />
    </div>
  );
}
